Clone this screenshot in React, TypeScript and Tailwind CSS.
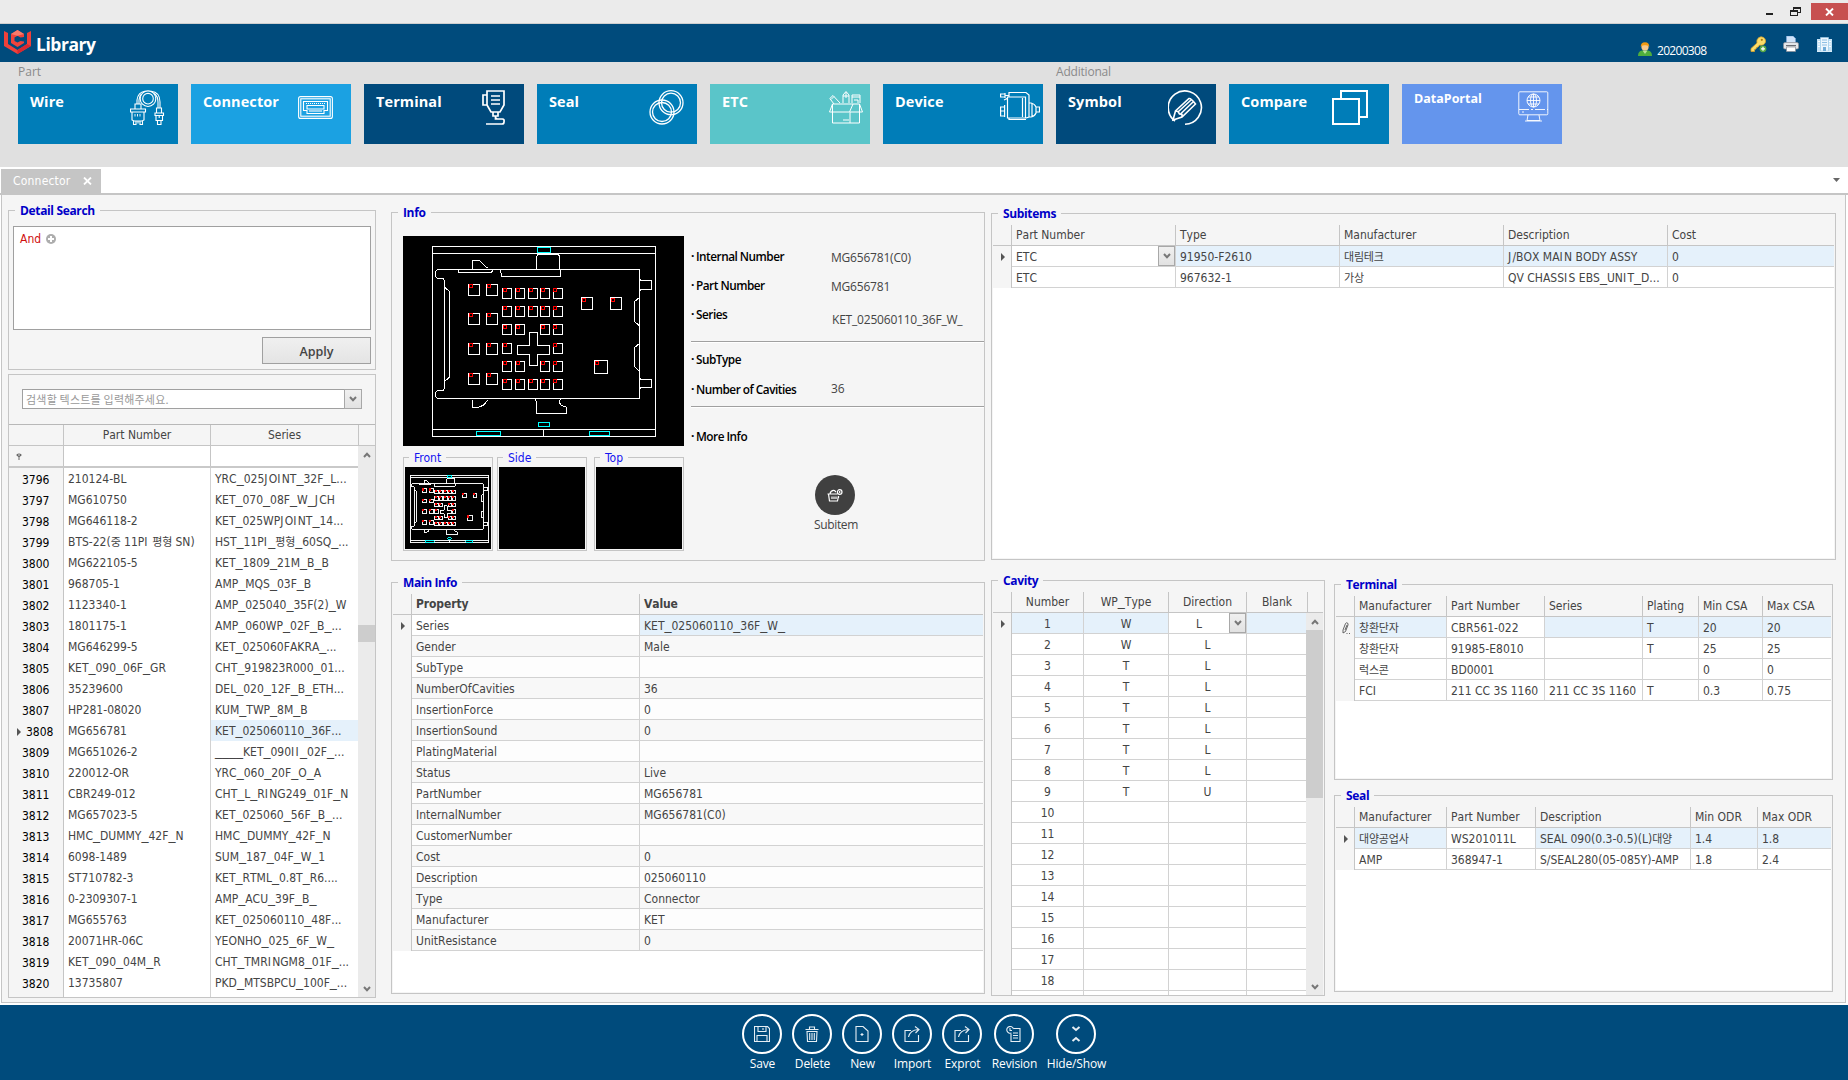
import React from "react";

type Kids = { children?: React.ReactNode };

const GRID_FONT = "[font-kerning:none] font-['DejaVu_Sans_Condensed','DejaVu_Sans','Noto_Sans_CJK_KR',sans-serif]";

/* ---------- shared pieces ---------- */

// Grid text: full-width underscores, wide capital I/J, and slightly smaller Hangul
function gridText(text: string): React.ReactNode {
  return text.split(/(_+|[IJ](?![a-z])|[\uac00-\ud7a3]+)/).map((part, i) => {
    if (i % 2 === 0) return part;
    if (part[0] === "_") return <span key={i} className="font-['DejaVu_Sans',sans-serif] text-[14px] leading-none">{part}</span>;
    if (part === "I" || part === "J") return <span key={i} className="tracking-[1.3px]">{part}</span>;
    return <span key={i} className="text-[11px] leading-none tracking-[-0.2px]">{part}</span>;
  });
}

function Group({ title, className, labelClass, children }: Kids & { title: string; className: string; labelClass?: string }) {
  return (
    <section className={`relative border border-[#c5c5c5] bg-[#f5f5f5] ${className}`}>
      <h2
        className={`absolute -top-[9px] bg-[#f5f5f5] px-[5px] text-xs leading-[18px] whitespace-nowrap ${
          labelClass ?? "left-[6px] font-['Open_Sans','Noto_Sans',sans-serif] font-bold tracking-[-0.35px] text-[#0000c8]"
        }`}
      >
        {title}
      </h2>
      {children}
    </section>
  );
}

function Chevron({ up = false }: { up?: boolean }) {
  return (
    <svg width="8" height="6" viewBox="0 0 8 6" className={up ? "rotate-180" : ""}>
      <path d="M1 1 L4 4.2 L7 1" fill="none" stroke="#777" strokeWidth="2" />
    </svg>
  );
}

function DropButton({ className }: { className: string }) {
  return (
    <span className={`flex shrink-0 items-center justify-center border border-[#a8a8a8] bg-linear-to-b from-[#f0f0f0] to-[#e2e2e2] ${className}`}>
      <Chevron />
    </span>
  );
}

function Marker() {
  return (
    <svg width="4" height="8" viewBox="0 0 4 8">
      <path d="M0 0 L4 4 L0 8 Z" fill="#555" />
    </svg>
  );
}

function Pencil() {
  return (
    <svg width="9" height="12" viewBox="0 0 9 12" fill="none" stroke="#555" strokeWidth="0.9">
      <path d="M1 8 L3.5 1.5 Q4.5 0 6 1.5 L6 3 L3.5 9.5 L1 11 Z M3 8 L5 3" />
      <path d="M4.5 11.5h1M7 11.5h1" />
    </svg>
  );
}

function ScrollBar({ before, thumb }: { before: string; thumb: string }) {
  return (
    <div className="flex w-[17px] shrink-0 flex-col bg-[#ebebeb]">
      <div className="flex h-[17px] shrink-0 items-center justify-center"><Chevron up /></div>
      <div className={before} />
      <div className={`bg-[#cdcdcd] ${thumb}`} />
      <div className="flex-1" />
      <div className="flex h-[17px] shrink-0 items-center justify-center"><Chevron /></div>
    </div>
  );
}

function Head({ cols, labels, className = "" }: { cols: string; labels: string[]; className?: string }) {
  return (
    <div className={`grid h-[21px] bg-[#f5f5f5] ${cols}`}>
      <span className="border-r border-b border-[#c5c5c5]" />
      {labels.map((l, i) => (
        <span key={l} className={`overflow-hidden border-b border-[#c5c5c5] px-1 leading-5 whitespace-nowrap ${i < labels.length - 1 ? "border-r" : ""} ${className}`}>
          {gridText(l)}
        </span>
      ))}
    </div>
  );
}

type Row = { cells: React.ReactNode[]; tint?: number[]; mark?: React.ReactNode; stripe?: string };

function Rows({ cols, rows, cellClass = "px-1" }: { cols: string; rows: Row[]; cellClass?: string }) {
  return (
    <>
      {rows.map((r, y) => (
        <div key={y} className={`grid h-[21px] shrink-0 ${cols}`}>
          <span className="flex items-center justify-center border-r border-r-[#c5c5c5] bg-[#f5f5f5] pl-[2px]">{r.mark}</span>
          {r.cells.map((c, i) => (
            <span
              key={i}
              className={`overflow-hidden border-b border-[#d2d2d2] leading-[22px] whitespace-nowrap ${typeof c === "string" ? cellClass : ""} ${
                i === r.cells.length - 1 ? "" : "border-r"
              } ${r.tint?.includes(i) ? "bg-[#e5f1fb]" : r.stripe ?? "bg-white"}`}
            >
              {typeof c === "string" ? gridText(c) : c}
            </span>
          ))}
        </div>
      ))}
    </>
  );
}

/* ---------- top area ---------- */

function TitleBar() {
  return (
    <div className="flex h-6 items-start justify-end border-b border-[#cfcfcf] bg-[#ebebeb]">
      <div className="mt-[13px] mr-[17px] h-[2px] w-[7px] bg-[#222]" />
      <svg width="11" height="10" viewBox="0 0 11 10" className="mt-[7px] mr-[10px]" shapeRendering="crispEdges">
        <path d="M3.5 3V.5h7v5H8" fill="none" stroke="#222" />
        <path d="M3 1h8" stroke="#222" strokeWidth="2" />
        <path d="M.5 3.5h7v5h-7z" fill="#ebebeb" stroke="#222" />
        <path d="M0 4h8" stroke="#222" strokeWidth="2" />
      </svg>
      <div className="mt-[3px] flex h-[17px] w-[37px] items-center justify-center bg-[#c75050]">
        <svg width="9" height="8" viewBox="0 0 9 8">
          <path d="M1 0.5L8 7.5M8 .5L1 7.5" stroke="#fff" strokeWidth="1.9" />
        </svg>
      </div>
    </div>
  );
}

function Header() {
  return (
    <header className="flex h-[38px] items-start bg-[#004b7c]">
      <svg width="27" height="24" viewBox="0 0 27 24" className="mt-[6px] ml-1">
        <path d="M0 1 L4 3 V14 L13.5 20 L23 14 V3 L27 1 V16 L13.5 24 L0 16Z" fill="#f0413a" />
        <path d="M13.5 20 L23 14 L27 16 L13.5 24Z" fill="#d8292f" />
        <path d="M13.5 0 L20 4 V7 L16.5 7.5 L13.5 5.8 L10.5 7.5 V11 L13.5 12.6 L16.5 11 L20 11.5 V13 L13.5 17 L7 13 V4Z" fill="#ef443c" />
        <path d="M13.5 0 L20 4 L13.5 5.8 L7 4Z" fill="#fa7a6b" />
      </svg>
      <h1 className="mt-[8px] ml-[5px] font-['Open_Sans','Noto_Sans',sans-serif] text-[17.5px] leading-6 font-bold tracking-[-0.45px] text-white">Library</h1>
      <div className="flex-1" />
      <svg width="14" height="15" viewBox="0 0 14 15" className="mt-[18px]">
        <path d="M0 14 Q0 9 4 8.5 L10 8.5 Q14 9 14 14Z" fill="#4fae3c" />
        <path d="M4.5 8.5 L7 12 L9.5 8.5Z" fill="#b8e59c" />
        <circle cx="7" cy="5" r="3.6" fill="#fbc98b" />
        <path d="M2.8 5 Q2.5 .5 7 .3 Q11.5 .3 11.2 5 Q10 2.8 7 3.3 Q4 2.8 2.8 5Z" fill="#f39a12" />
      </svg>
      <span className="mt-[19px] ml-[5px] w-[93px] font-['Open_Sans','Noto_Sans',sans-serif] text-xs leading-4 tracking-[-0.7px] text-white">20200308</span>
      <svg width="17" height="17" viewBox="0 0 17 17" className="mt-[12px]">
        <path d="M1 12.500 L7 7 Q6 2 11 .8 Q16 1.5 15.5 6 Q14 10 9.5 9 L8 11 L6.500 11.500 L6 13 L4.5 13.500 V15.5 H1Z" fill="#fbdc6a" stroke="#d9a428" strokeWidth=".8" />
        <circle cx="11.800" cy="3.800" r="1.100" fill="#a97a10" />
        <circle cx="13" cy="12.800" r="3.400" fill="#58a945" />
        <path d="M13 10.800v4M11 12.800h4" stroke="#fff" strokeWidth="1.300" />
      </svg>
      <svg width="16" height="16" viewBox="0 0 16 16" className="mt-[12px] ml-[16px]">
        <path d="M3.5 0H10l2.5 2.5V8h-9Z" fill="#cfe3fa" stroke="#7ea6d8" strokeWidth=".7" />
        <rect x=".5" y="6.5" width="15" height="6.500" rx="1.5" fill="#e4e6ea" stroke="#8b8e96" strokeWidth=".7" />
        <path d="M3 9h10v1.200H3z" fill="#6a6d74" />
        <path d="M3.5 11h9v4.5h-9z" fill="#fff" stroke="#8b8e96" strokeWidth=".7" />
      </svg>
      <svg width="15" height="16" viewBox="0 0 15 16" className="mt-[12px] mr-[16px] ml-[18px]">
        <path d="M0 3h4v12H0zM11 3h4v12h-4z" fill="#c4e2f6" />
        <path d="M3.5 1.5h8V15h-8z" fill="#eef7fd" stroke="#9ccbe8" strokeWidth=".7" />
        <path d="M5 4h5M5 6.5h5M5 9h5" stroke="#8fc0e4" strokeWidth="1.1" />
        <path d="M6 11h3v4H6z" fill="#6fabd8" />
        <path d="M1 5.5h2M1 8h2M1 10.5h2M12 5.5h2M12 8h2M12 10.5h2" stroke="#fff" />
        <path d="M0 15.5h15" stroke="#d8ecf9" />
      </svg>
    </header>
  );
}

const ICONS: Record<string, React.ReactNode> = {
  Wire: (
    <svg width="35" height="35" viewBox="0 0 35 35" fill="none" stroke="#fff" strokeWidth="1.1" className="mt-[6px] mr-[13px]">
      <circle cx="18" cy="8.7" r="7.8" /><circle cx="18" cy="8.7" r="5.3" />
      <path d="M7 14V10Q8 2 15 1.2M9 14V10Q9.5 6 11 4.5M21 1.2Q30 2 30 12V18M24 3.5Q28 6 28 12V18" />
      <path d="M5 14h6v5H5zM.5 19h15v3H.5zM2 22h12v8l-2 1H4l-2-1zM3.5 31v3.5H6V31M10 31v3.5h2.5V31M8 31v2.5" />
      <path d="M5 24v2.5M7.5 24v2.5M10 24v2.5" strokeWidth=".9" />
      <path d="M26.5 18h5v5h-5zM25 23h8.500v2.500h-8.500zM26 25.500h6.500v5H26zM27.500 30.500h3.500v4h-3.500zM29.200 25v3" />
    </svg>
  ),
  Connector: (
    <svg width="35" height="23" viewBox="0 0 35 23" fill="none" stroke="#fff" strokeWidth="1.1" className="mt-[12px] mr-[18px]">
      <rect x=".6" y=".6" width="33.800" height="21.800" rx="2" /><rect x="2.800" y="2.800" width="29.400" height="17.400" />
      <path d="M5.500 5.500h24v9h-3.500v3H9v-3H5.500zM9 9.500h17v3.500H9z" /><path d="M8 7.500h19" strokeDasharray="1 1" /><path d="M11 15h13" />
    </svg>
  ),
  Terminal: (
    <svg width="23" height="35" viewBox="0 0 23 35" fill="none" stroke="#fff" strokeWidth="1.700" className="mt-[6px] mr-[19px]">
      <path d="M5 1h17v14l-4 7h-9l-4-7zM5 5H1v10h4M9 6h9M9 10h9M9 14h9M11 22v4h5v-4M13.500 26v3h7Q22.500 29 22 32Q22 34 20 34H4M15 29l-1-1" />
    </svg>
  ),
  Seal: (
    <svg width="35" height="35" viewBox="0 0 35 35" fill="none" stroke="#fff" strokeWidth="1.300" className="mt-[6px] mr-[13px]">
      <circle cx="22" cy="12.700" r="12" /><circle cx="22" cy="12.700" r="9.500" />
      <circle cx="13" cy="22" r="12" /><circle cx="13" cy="22" r="9.500" />
    </svg>
  ),
  ETC: (
    <svg width="34" height="33" viewBox="0 0 34 33" fill="none" stroke="#fff" strokeWidth="1" className="mt-[7px] mr-[7px]">
      <path d="M3.500 13h27v19h-27zM3.500 13L.500 21h20L24 13M21 21v11M30.500 13l3 8H21M15 28v2M17 28v2M19 28v2" />
      <path d="M5 13L.800 7.500L4 4.500L11 12M2 8.500l3-3M14 12V4l3-3.500L20 4v8M17 1v6M14 5h6M23 12V4h8v8M23 6h8M25 9h4v3" />
    </svg>
  ),
  Device: (
    <svg width="40" height="29" viewBox="0 0 40 29" fill="none" stroke="#fff" strokeWidth="1.200" className="mt-[7px] mr-[3px]">
      <path d="M7.500 6h18v21h-18zM5 3H.600v3H5M5 2v5M5 4.500h4M9 6V1.500h17L29 4v22l-3 1M4 9l4-2M.600 16h4v9h-4zM.600 20h4M4.600 14v12M9 27v1.500h17M22.500 7v19M29 12h2q4 1 5 4v6q-1 3-5 4h-2M32 12v14M36 16h3.500v5H36" />
    </svg>
  ),
  Symbol: (
    <svg width="35" height="35" viewBox="0 0 35 35" fill="none" stroke="#fff" strokeWidth="1.600" className="mt-[6px] mr-[13px]">
      <path d="M7 31A16.600 16.600 0 1 1 17 34.200" />
      <path d="M5 30L7.500 21L21 8.500Q23 8 27.500 14L14 27zM7.500 21l2.500.500 1.500 2.500 2.500.500v2.500M10.500 21.500L23 10M12.500 24L25 12" />
    </svg>
  ),
  Compare: (
    <svg width="36" height="35" viewBox="0 0 36 35" fill="none" stroke="#fff" strokeWidth="2" className="mt-[6px] mr-[21px]">
      <path d="M1 9h26v25H1zM9 9V1h26v26h-8" />
    </svg>
  ),
  DataPortal: (
    <svg width="31" height="31" viewBox="0 0 31 31" fill="none" stroke="#fff" strokeWidth=".900" className="mt-[7px] mr-[13px]">
      <rect x=".800" y=".800" width="29" height="23" rx="1" /><path d="M1 18.500h29" strokeDasharray="10 2 2 2" /><path d="M4 21h2M10 24L9 29.500H22L21 24M7 30h17" />
      <circle cx="15.500" cy="9.500" r="6.500" /><ellipse cx="15.500" cy="9.500" rx="3" ry="6.500" /><path d="M9 9.500h13M15.500 3v13M10 6h11M10 13h11" />
    </svg>
  ),
};

const TILES: [string, string][] = [
  ["Wire", "bg-[#007db8]"],
  ["Connector", "bg-[#1ba1e2]"],
  ["Terminal", "bg-[#004a7c]"],
  ["Seal", "bg-[#007db8]"],
  ["ETC", "bg-[#5ac5c9]"],
  ["Device", "bg-[#007db8]"],
  ["Symbol", "bg-[#004a7c]"],
  ["Compare", "bg-[#007db8]"],
  ["DataPortal", "bg-[#6495ed]"],
];

function TileRow({ items }: { items: [string, string][] }) {
  return (
    <div className="flex gap-[13px]">
      {items.map(([name, bg]) => (
        <button key={name} className={`flex h-[60px] w-[160px] items-start justify-between ${bg}`}>
          <span
            className={`ml-3 font-['Open_Sans','Noto_Sans',sans-serif] leading-5 font-bold text-white ${
              name === "DataPortal" ? "mt-[5px] text-[12.500px]" : "mt-[8px] text-[14.500px] tracking-[0.1px]"
            }`}
          >
            {name}
          </span>
          {ICONS[name]}
        </button>
      ))}
    </div>
  );
}

function Ribbon() {
  return (
    <nav className="flex h-[105px] gap-[13px] bg-[#e0e0e0] pl-[18px] font-['Open_Sans','Noto_Sans',sans-serif] text-xs text-[#8a8a8a]">
      <div>
        <div className="h-[22px] leading-[19px]">Part</div>
        <TileRow items={TILES.slice(0, 6)} />
      </div>
      <div>
        <div className="h-[22px] leading-[19px] tracking-[-0.2px]">Additional</div>
        <TileRow items={TILES.slice(6)} />
      </div>
    </nav>
  );
}

function TabStrip() {
  return (
    <div className="flex h-[28px] items-end justify-between border-b-2 border-[#c5c5c5] bg-white pl-px">
      <div className={`flex h-6 w-[100px] items-center bg-[#c5c5c5] pl-3 text-xs leading-[26px] text-white ${GRID_FONT}`}>
        <span className="w-[70px] tracking-[0.2px]">Connector</span>
        <svg width="9" height="8" viewBox="0 0 9 8"><path d="M1 .5L8 7.500M8 .5L1 7.500" stroke="#fff" strokeWidth="1.800" /></svg>
      </div>
      <svg width="7" height="4" viewBox="0 0 7 4" className="mr-2 mb-[11px]"><path d="M0 0h7L3.500 4z" fill="#666" /></svg>
    </div>
  );
}

/* ---------- left column ---------- */

const PARTS: [string, string, string][] = [
  ["3796", "210124-BL", "YRC_025JOINT_32F_L..."],
  ["3797", "MG610750", "KET_070_08F_W_JCH"],
  ["3798", "MG646118-2", "KET_025WPJOINT_14..."],
  ["3799", "BTS-22(중 11PI 평형 SN)", "HST_11PI_평형_60SQ_..."],
  ["3800", "MG622105-5", "KET_1809_21M_B_B"],
  ["3801", "968705-1", "AMP_MQS_03F_B"],
  ["3802", "1123340-1", "AMP_025040_35F(2)_W"],
  ["3803", "1801175-1", "AMP_060WP_02F_B_..."],
  ["3804", "MG646299-5", "KET_025060FAKRA_..."],
  ["3805", "KET_090_06F_GR", "CHT_919823R000_01..."],
  ["3806", "35239600", "DEL_020_12F_B_ETH..."],
  ["3807", "HP281-08020", "KUM_TWP_8M_B"],
  ["3808", "MG656781", "KET_025060110_36F..."],
  ["3809", "MG651026-2", "____KET_090II_02F_..."],
  ["3810", "220012-OR", "YRC_060_20F_O_A"],
  ["3811", "CBR249-012", "CHT_L_RING249_01F_N"],
  ["3812", "MG657023-5", "KET_025060_56F_B_..."],
  ["3813", "HMC_DUMMY_42F_N", "HMC_DUMMY_42F_N"],
  ["3814", "6098-1489", "SUM_187_04F_W_1"],
  ["3815", "ST710782-3", "KET_RTML_0.8T_R6...."],
  ["3816", "0-2309307-1", "AMP_ACU_39F_B_"],
  ["3817", "MG655763", "KET_025060110_48F..."],
  ["3818", "20071HR-06C", "YEONHO_025_6F_W_"],
  ["3819", "KET_090_04M_R", "CHT_TMRINGM8_01F_..."],
  ["3820", "13735807", "PKD_MTSBPCU_100F_..."],
  ["", "", ""],
];

function LeftColumn() {
  return (
    <div className="ml-[6px] flex w-[368px] flex-col pt-[15px]">
      <Group title="Detail Search" className="h-[160px] shrink-0 px-1 pt-[15px]">
        <div className="h-[104px] border border-[#a0a0a0] bg-white px-[6px] pt-[4px]">
          <div className={`flex items-center gap-[5px] text-xs leading-4 text-[#d01010] ${GRID_FONT}`}>
            And
            <svg width="10" height="10" viewBox="0 0 10 10">
              <circle cx="5" cy="5" r="5" fill="#adadad" />
              <path d="M5 2v6M2 5h6" stroke="#fff" strokeWidth="2" />
            </svg>
          </div>
        </div>
        <button className="mt-[7px] ml-auto block h-[27px] w-[109px] border border-[#a0a0a0] bg-linear-to-b from-[#f0f0f0] to-[#e4e4e4] pt-[2px] font-['Open_Sans','Noto_Sans',sans-serif] text-[12.500px] leading-[23px] font-semibold text-[#444]">
          Apply
        </button>
      </Group>
      <section className="mt-[4px] flex h-[624px] shrink-0 flex-col border border-[#c5c5c5]">
        <div className="mt-[14px] mb-[15px] ml-[13px] flex h-5 w-[340px] border border-[#a0a0a0] bg-white">
          <span className="flex-1 pl-[3px] font-['Noto_Sans_CJK_KR',sans-serif] text-[11px] leading-[18px] tracking-[0.2px] text-[#999]">검색할 텍스트를 입력해주세요.</span>
          <DropButton className="-m-px w-[18px]" />
        </div>
        <div className={`flex min-h-0 flex-1 flex-col border-t border-[#b8b8b8] text-xs text-[#444] ${GRID_FONT}`}>
          <div className="grid h-[21px] shrink-0 grid-cols-[55px_147px_148px_16px] border-b border-[#c5c5c5] text-center leading-5">
            <span className="border-r border-[#c5c5c5]" />
            <span className="border-r border-[#c5c5c5]">Part Number</span>
            <span className="border-r border-[#c5c5c5]">Series</span>
          </div>
          <div className="flex min-h-0 flex-1">
            <div className="flex w-[349px] flex-col overflow-hidden">
              <div className="grid h-[22px] shrink-0 grid-cols-[55px_147px_147px] border-b-2 border-[#c9c9c9] bg-white">
                <span className="flex items-center border-r border-[#c5c5c5] bg-[#f5f5f5] pl-[7px]">
                  <svg width="6" height="7" viewBox="0 0 6 7">
                    <path d="M.500 1.500Q3-.500 5.500 1.500V2.500L3.500 4V7h-1V4L.500 2.500Z" fill="#666" />
                    <path d="M2 2h2" stroke="#f5f5f5" strokeWidth=".800" />
                  </svg>
                </span>
                <span className="border-r border-[#c5c5c5]" />
                <span />
              </div>
              {PARTS.map(([n, part, series], i) => (
                <div key={i} className="grid h-[21px] shrink-0 grid-cols-[55px_147px_147px] bg-white leading-[22px] whitespace-nowrap">
                  <span className={`flex items-center border-r border-[#c5c5c5] bg-[#f5f5f5] pt-px text-black ${n === "3808" ? "gap-[5px] pl-2" : "pl-[13px]"}`}>
                    {n === "3808" && <Marker />}
                    {n}
                  </span>
                  <span className="overflow-hidden border-r border-b border-[#d2d2d2] pl-1">{gridText(part)}</span>
                  <span className={`overflow-hidden border-b border-[#d2d2d2] pl-1 ${n === "3808" ? "bg-[#e5f1fb]" : ""}`}>{gridText(series)}</span>
                </div>
              ))}
            </div>
            <ScrollBar before="h-[162px]" thumb="h-[17px]" />
          </div>
        </div>
      </section>
    </div>
  );
}

/* ---------- connector drawing ---------- */

// [x, y, width, height] of each cavity; the small marker sits in its upper left corner
const CAVITIES: [number, number, number, number][] = [
  ...[253, 340, 430, 520].flatMap((y) => [235, 290].map((x): [number, number, number, number] => [x, y, 33, 32])),
  ...[265, 319, 374, 430, 484, 538].flatMap((y, r) =>
    [338, 376, 415, 451, 489]
      .filter((_, c) => !(c === 2 && r >= 2 && r <= 4) && !(r === 3 && (c === 1 || c === 3)))
      .map((x): [number, number, number, number] => [x, y, 27, 29])
  ),
  [574, 293, 33, 35],
  [661, 293, 33, 35],
  [613, 482, 40, 38],
];

function Drawing({ viewBox, line, className }: { viewBox: string; line: number; className: string }) {
  return (
    <svg viewBox={viewBox} className={`bg-black ${className}`} fill="none" stroke="#fff" strokeWidth={line} shapeRendering="crispEdges">
      <path d="M127.500 139.500H796.500V709.500H127.500ZM127.500 160.500H796.500M127.500 688.500H796.500M460.500 688.500V709.500" />
      <path d="M142 208.500H748.500V595.500H142L136.500 589.500V577.500L142 571.500H160L163.500 565.500V241.500L160 235.500H142L136.500 229.500V214.500Z" />
      <path d="M163.500 262L178.500 274V532L163.500 544" />
      <path d="M205.500 208.500V216.500H304.500L308 211M247.500 208V181.500H268.500L293 205M331.500 208.500L334.500 229.500H511.500V208M439.500 208V169L444 163.500H505L508.500 169V208M247.500 601V622.500H262L280 616L294 600M436 598L439.500 605V640.500H529.500V622L514 616L508.500 609V601L514 597" />
      <path d="M748.500 235L753 241.500H784.500V268.500H753L748.500 276M748.500 532L753 538.500H784.500V562.500H753L748.500 570M748.500 292L733.500 305V364L748.500 378M748.500 430L733.500 443V500L748.500 514" />
      <path d="M418.500 397.500H442.500V436.500H478.500V463.500H442.500V496.500H418.500V463.500H382.500V436.500H418.500Z" />
      {CAVITIES.map(([x, y, w, h], i) => (
        <g key={i}>
          <rect x={x + 0.5} y={y + 0.5} width={w} height={h} />
          <rect x={x + 2} y={y + 1} width="9" height="9" stroke="#f00" />
        </g>
      ))}
      <path d="M442.500 142.500h39v15h-39zM445.500 667.500h33v12h-33zM258.500 694.500h73v12h-73zM598.500 694.500h60v12h-60z" stroke="#0ff" />
    </svg>
  );
}

/* ---------- middle column ---------- */

function Field({ label, value, className, valueClass = "" }: { label: string; value?: string; className: string; valueClass?: string }) {
  return (
    <div className={`flex items-center leading-4 ${className}`}>
      <span className="w-[5px] font-bold text-black">·</span>
      <span className="w-[135px] text-[11.800px] font-semibold tracking-[-0.5px] text-black">{label}</span>
      <span className={`tracking-[-0.2px] text-[#444] ${valueClass}`}>{value}</span>
    </div>
  );
}

const THUMB_LABEL = "font-['DejaVu_Sans_Condensed','DejaVu_Sans',sans-serif] text-[#1414f0] left-[5px]";

function InfoPanel() {
  return (
    <Group title="Info" className="flex h-[349px] shrink-0 pt-[23px] pl-[11px]">
      <div className="w-[281px]">
        <Drawing viewBox="39 108 843 630" line={3} className="block h-[210px] w-[281px]" />
        <div className="mt-[11px] flex">
          <Group title="Front" labelClass={THUMB_LABEL} className="h-[94px] w-[90px] px-px pt-[9px]">
            <Drawing viewBox="85 68 729 695" line={8} className="block h-[82px] w-[86px]" />
          </Group>
          <Group title="Side" labelClass={THUMB_LABEL} className="ml-1 h-[94px] w-[90px] px-px pt-[9px]">
            <div className="h-[82px] w-[86px] bg-black" />
          </Group>
          <Group title="Top" labelClass={THUMB_LABEL} className="ml-[7px] h-[94px] w-[90px] px-px pt-[9px]">
            <div className="h-[82px] w-[86px] bg-black" />
          </Group>
        </div>
      </div>
      <div className="ml-[7px] flex-1 font-['Open_Sans','Noto_Sans',sans-serif] text-xs">
        <Field label="Internal Number" value="MG656781(C0)" valueClass="mt-[3px]" className="mt-[10px] h-5" />
        <Field label="Part Number" value="MG656781" valueClass="mt-[3px]" className="mt-[9px] h-5" />
        <Field label="Series" value="KET_025060110_36F_W_" valueClass="mt-[12px] ml-px" className="mt-[9px] h-5" />
        <div className="mt-[17px] h-[2px] border-t border-[#a0a0a0] bg-white" />
        <Field label="SubType" className="mt-[6px] h-5" />
        <Field label="Number of Cavities" value="36" className="mt-[10px] h-5" />
        <div className="mt-[7px] h-[2px] border-t border-[#a0a0a0] bg-white" />
        <Field label="More Info" className="mt-[18px] h-5" />
        <div className="mt-[29px] flex w-[288px] flex-col items-center">
          <span className="flex size-10 items-center justify-center rounded-full bg-[#404040]">
            <svg width="16" height="13" viewBox="0 0 16 13" fill="none" stroke="#fff" strokeWidth="1.200">
              <path d="M.500 5h10M1.500 5l1 7h8l1-5M3 4.500Q4 1 7.500 1.500L9 3M5 7.500V10M7 7.500V10M9 7.500V10" />
              <circle cx="12.700" cy="3" r="2.300" /><path d="M12.700 2v2M11.500 7v2" />
            </svg>
          </span>
          <span className="mt-[2px] ml-[2px] tracking-[-0.35px] text-[#444]">Subitem</span>
        </div>
      </div>
    </Group>
  );
}

const PROPS: [string, string][] = [
  ["Series", "KET_025060110_36F_W_"],
  ["Gender", "Male"],
  ["SubType", ""],
  ["NumberOfCavities", "36"],
  ["InsertionForce", "0"],
  ["InsertionSound", "0"],
  ["PlatingMaterial", ""],
  ["Status", "Live"],
  ["PartNumber", "MG656781"],
  ["InternalNumber", "MG656781(C0)"],
  ["CustomerNumber", ""],
  ["Cost", "0"],
  ["Description", "025060110"],
  ["Type", "Connector"],
  ["Manufacturer", "KET"],
  ["UnitResistance", "0"],
];

function MainInfo() {
  const cols = "grid-cols-[19px_228px_1fr]";
  return (
    <Group title="Main Info" className="mt-[21px] h-[412px] shrink-0 px-px pt-[11px] pb-px">
      <div className={`h-full bg-white text-xs text-[#444] ${GRID_FONT}`}>
        <Head cols={cols} labels={["Property", "Value"]} className="font-bold tracking-[-0.1px]" />
        <Rows
          cols={cols}
          rows={PROPS.map(([k, v], i) => ({
            cells: [k, v],
            tint: i === 0 ? [1] : undefined,
            mark: i === 0 ? <Marker /> : undefined,
            stripe: i === 0 ? "bg-white" : i % 2 ? "bg-[#f8f8f8]" : "bg-[#fdfdfd]",
          }))}
        />
      </div>
    </Group>
  );
}

/* ---------- right column ---------- */

function Subitems() {
  const cols = "grid-cols-[19px_164px_164px_164px_164px_1fr]";
  return (
    <Group title="Subitems" className="h-[347px] w-[845px] shrink-0 px-px pt-[11px] pb-px">
      <div className={`h-full bg-white text-xs text-[#444] ${GRID_FONT}`}>
        <Head cols={cols} labels={["Part Number", "Type", "Manufacturer", "Description", "Cost"]} />
        <Rows
          cols={cols}
          rows={[
            {
              mark: <Marker />,
              tint: [1, 2, 3, 4],
              cells: [
                <span className="flex h-5 pl-1"><span className="flex-1">ETC</span><DropButton className="w-[17px]" /></span>,
                "91950-F2610",
                "대림테크",
                "J/BOX MAIN BODY ASSY",
                "0",
              ],
            },
            { cells: ["ETC", "967632-1", "가상", "QV CHASSIS EBS_UNIT_D...", "0"] },
          ]}
        />
      </div>
    </Group>
  );
}

const CAVITY_TYPES: [string, string][] = [
  ["W", "L"], ["W", "L"], ["T", "L"], ["T", "L"], ["T", "L"], ["T", "L"], ["T", "L"], ["T", "L"], ["T", "U"],
];

function Cavity() {
  const cols = "grid-cols-[19px_72px_85px_78px_60px]";
  return (
    <Group title="Cavity" className="h-[416px] w-[334px] shrink-0 px-px pt-[11px]">
      <div className={`flex h-[403px] flex-col bg-white text-xs text-[#444] ${GRID_FONT}`}>
        <div className="flex shrink-0">
          <Head cols="w-[314px] grid-cols-[19px_72px_85px_78px_60px]" labels={["Number", "WP_Type", "Direction", "Blank"]} className="text-center" />
          <span className="h-[21px] flex-1 border-b border-l border-[#c5c5c5] bg-[#f5f5f5]" />
        </div>
        <div className="flex min-h-0 flex-1">
          <div className="flex w-[313px] flex-col overflow-hidden">
            <Rows
              cols={cols}
              cellClass="text-center"
              rows={Array.from({ length: 19 }, (_, i) => ({
                mark: i === 0 ? <Marker /> : undefined,
                tint: i === 0 ? [0, 1, 3] : undefined,
                cells: [
                  i < 18 ? String(i + 1) : "",
                  CAVITY_TYPES[i]?.[0] ?? "",
                  i === 0 ? (
                    <span className="flex h-5 text-center"><span className="flex-1">L</span><DropButton className="w-[17px]" /></span>
                  ) : (
                    CAVITY_TYPES[i]?.[1] ?? ""
                  ),
                  "",
                ],
              }))}
            />
          </div>
          <ScrollBar before="h-0" thumb="h-[168px]" />
        </div>
      </div>
    </Group>
  );
}

function Terminal() {
  const cols = "grid-cols-[19px_92px_98px_98px_56px_64px_1fr]";
  return (
    <Group title="Terminal" className="h-[196px] px-px pt-[11px] pb-px">
      <div className={`h-full bg-white text-xs text-[#444] ${GRID_FONT}`}>
        <Head cols={cols} labels={["Manufacturer", "Part Number", "Series", "Plating", "Min CSA", "Max CSA"]} />
        <Rows
          cols={cols}
          rows={[
            { mark: <Pencil />, tint: [0, 2, 3, 4, 5], cells: ["창환단자", "CBR561-022", "", "T", "20", "20"] },
            { cells: ["창환단자", "91985-E8010", "", "T", "25", "25"] },
            { cells: ["럭스콘", "BD0001", "", "", "0", "0"] },
            { cells: ["FCI", "211 CC 3S 1160", "211 CC 3S 1160", "T", "0.3", "0.75"] },
          ]}
        />
      </div>
    </Group>
  );
}

function Seal() {
  const cols = "grid-cols-[19px_92px_89px_155px_67px_1fr]";
  return (
    <Group title="Seal" className="mt-[15px] h-[197px] px-px pt-[11px] pb-px">
      <div className={`h-full bg-white text-xs text-[#444] ${GRID_FONT}`}>
        <Head cols={cols} labels={["Manufacturer", "Part Number", "Description", "Min ODR", "Max ODR"]} />
        <Rows
          cols={cols}
          rows={[
            { mark: <Marker />, tint: [0, 2, 3, 4], cells: ["대양공업사", "WS201011L", "SEAL 090(0.3-0.5)(L)대양", "1.4", "1.8"] },
            { cells: ["AMP", "368947-1", "S/SEAL280(05-085Y)-AMP", "1.8", "2.4"] },
          ]}
        />
      </div>
    </Group>
  );
}

/* ---------- footer ---------- */

const ACTIONS: [string, string, React.ReactNode][] = [
  ["Save", "w-[50px]", <path d="M.500 .500h13l2 2v13H.500zM4 .500v5h8v-5M9 2v2M3 15.500v-6h10v6" />],
  ["Delete", "w-[50px]", <path d="M1.500 3.500h13M5.500 3.500V1h5v2.500M3 5.500l.500 10h9l.500-10zM5.700 7v7M8 7v7M10.300 7v7" />],
  ["New", "w-[50px]", <path d="M2 .500h7L14 5v10.500H2zM8 7v3M6.500 8.500h3" />],
  ["Import", "w-[50px]", <path d="M7 4.500H1v11h13.500V9M4.500 11Q6 4 14.500 3.500M11 .500l4 3-3.500 3.500" />],
  ["Exprot", "w-[50px]", <path d="M7 4.500H1v11h13.500V9M4.500 11Q6 4 14.500 3.500M11 .500l4 3-3.500 3.500" />],
  ["Revision", "w-[54px]", <path d="M8 2.500h6v13H5V8M7 7h5M7 9.500h5M7 12h5M5.500 7A3.400 3.400 0 1 1 7.500 3M4 2v2.500h2" />],
  ["Hide/Show", "w-[70px]", <path d="M4.500 1L8 4L11.500 1M4.500 15L8 12L11.500 15" strokeWidth="2" />],
];

function Footer() {
  return (
    <footer className="flex h-[75px] bg-[#004b7c] pt-[9px] pl-[737px] font-['Open_Sans','Noto_Sans',sans-serif] text-xs text-white">
      {ACTIONS.map(([name, width, art]) => (
        <button key={name} className={`flex flex-col items-center ${width}`}>
          <span className="flex size-10 items-center justify-center rounded-full border-2 border-white">
            <svg width="16" height="16" viewBox="0 0 16 16" fill="none" stroke="#e6eef4" strokeWidth="1.100">{art}</svg>
          </span>
          <span className="mt-[2px] ml-[1px] leading-4 tracking-[-0.15px] whitespace-nowrap">{name}</span>
        </button>
      ))}
    </footer>
  );
}

export default function App() {
  return (
    <div className="flex h-[1080px] w-[1848px] flex-col overflow-hidden bg-white">
      <TitleBar />
      <Header />
      <Ribbon />
      <TabStrip />
      <main className="mr-[2px] mb-[2px] ml-px flex min-h-0 flex-1 border border-t-0 border-[#c5c5c5] bg-[#f5f5f5]">
        <LeftColumn />
        <div className="ml-[15px] flex w-[594px] flex-col pt-[17px]">
          <InfoPanel />
          <MainInfo />
        </div>
        <div className="ml-[6px] flex flex-col pt-[18px]">
          <Subitems />
          <div className="mt-[20px] flex">
            <Cavity />
            <div className="ml-[9px] flex w-[499px] flex-col pt-[4px]">
              <Terminal />
              <Seal />
            </div>
          </div>
        </div>
      </main>
      <Footer />
    </div>
  );
}
